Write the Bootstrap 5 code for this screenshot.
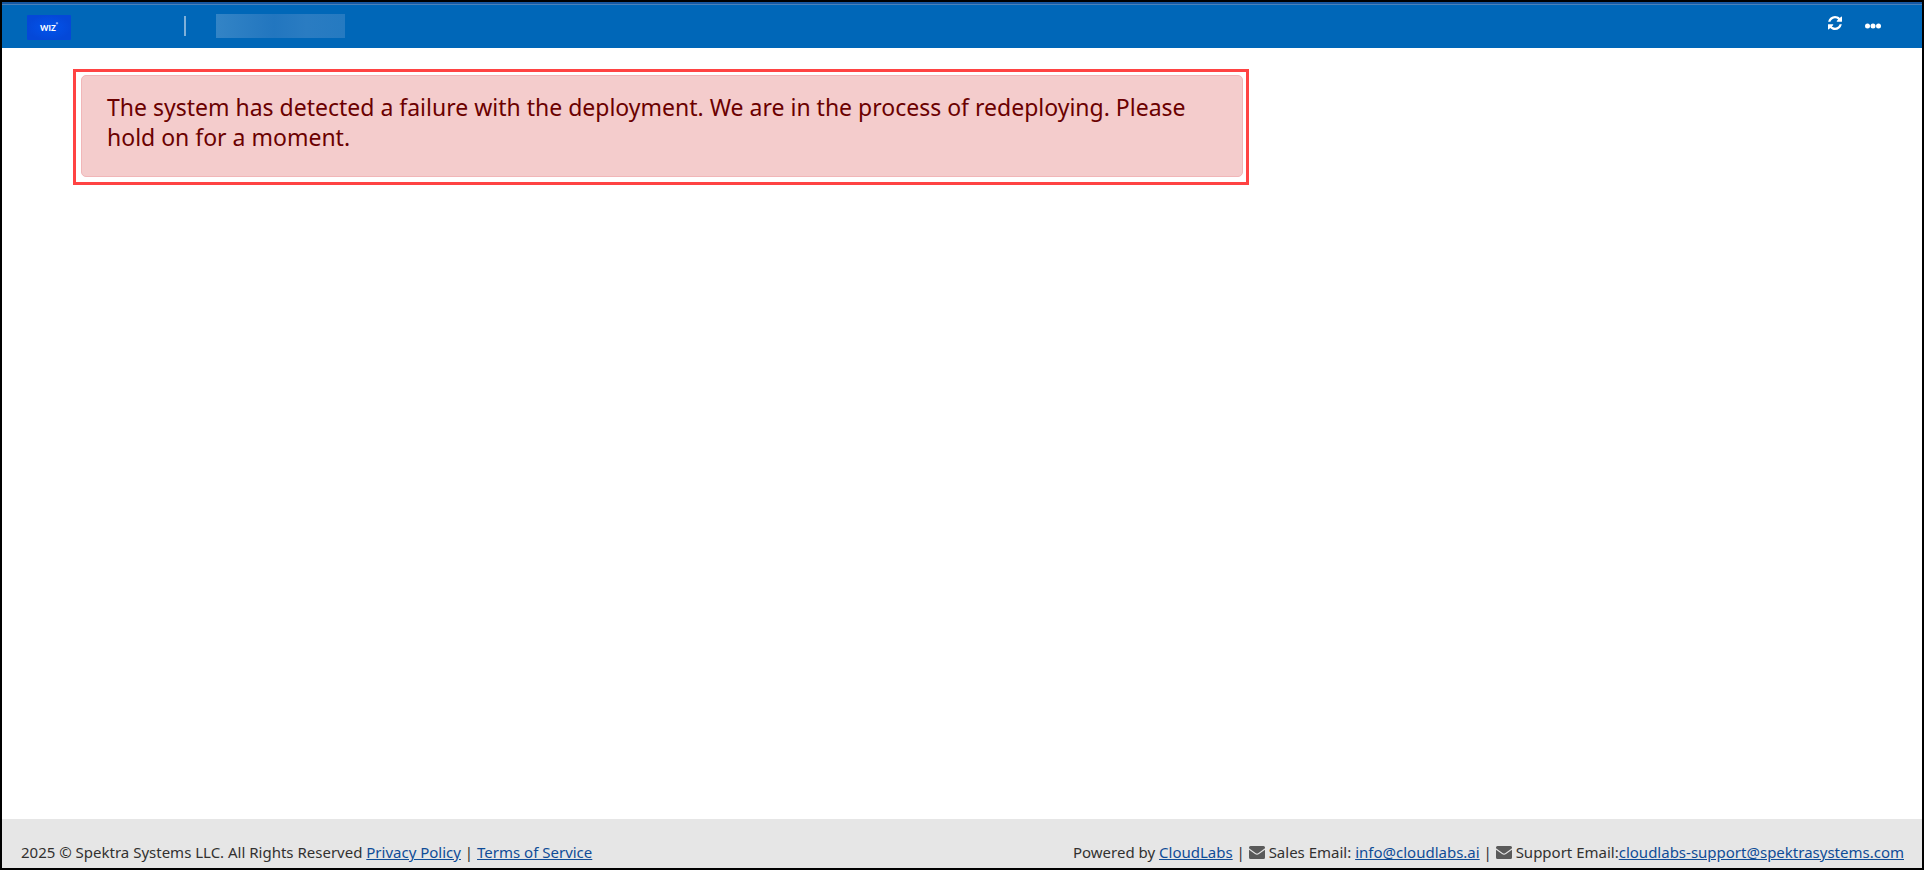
<!DOCTYPE html>
<html lang="en">
<head>
<meta charset="utf-8">
<meta name="viewport" content="width=device-width, initial-scale=1">
<title>CloudLabs</title>
<link href="https://cdn.jsdelivr.net/npm/bootstrap@5.3.0/dist/css/bootstrap.min.css" rel="stylesheet">
<style>
  body { font-family: "Noto Sans", "Open Sans", sans-serif; font-size: 15px; color: #323130; }
  .app-frame { border: 2px solid #000; }
  .top-strip { height: 3px; background: #1558a3; border-bottom: 1px solid #4a80b8; }
  .top-bar { background: #0067b8; height: 43px; padding: 0 41px 1px 25px; }
  .brand-logo { width: 44px; height: 25px; margin-top: 3px; }
  .bar-divider { width: 2px; height: 20px; background: #7fb0d9; margin-left: 113px; }
  .title-placeholder { width: 129px; height: 24px; margin-left: 30px; background: linear-gradient(90deg, #3384c6, #2276bf 45%, #2a7cc2 70%, #257ac1); }
  .bar-actions { gap: 23px; }
  .icon-btn { color: #fff; background: none; border: 0; padding: 0; line-height: 1; }
  .refresh-icon { margin-bottom: 6px; }
  .notice-outline { border: 3px solid #ff4343; padding: 3px 3px 5px 5px; max-width: 1176px; margin: 21px 24px 24px 71px; }
  .notice { background: #f4cccc; border: 1px solid #f1b6b8; border-radius: 5px; color: #6b0000; padding: 16px 25px 24px; margin: 0; }
  .notice-text { font-size: 23px; line-height: 30px; margin: 0; font-weight: 400; }
  .page-footer { background: #e6e6e6; padding: 22px 18px 4px 19px; line-height: 23px; }
  .page-footer a { color: #0f4c97; }
  .mail-icon { vertical-align: -1px; }
</style>
</head>
<body>
<div class="app-frame min-vh-100 d-flex flex-column">
  <header>
    <div class="top-strip"></div>
    <nav class="top-bar d-flex align-items-center" aria-label="Main">
      <a href="#" class="d-flex" aria-label="Wiz">
        <svg class="brand-logo" viewBox="0 0 44 25">
          <defs><radialGradient id="logoFill"><stop offset="0" stop-color="#0254ec"/><stop offset="1" stop-color="#0448d8"/></radialGradient></defs>
          <rect width="44" height="25" rx="1" fill="url(#logoFill)"/>
          <text x="13" y="16" font-family="Lato, sans-serif" font-size="8" font-weight="900" fill="#fff">WIZ</text>
          <path d="M30 7v2.400M28.800 8.200h2.400" stroke="#cfe0ff" stroke-width=".7"/>
        </svg>
      </a>
      <span class="bar-divider"></span>
      <span class="title-placeholder"></span>
      <div class="bar-actions ms-auto d-flex align-items-center">
        <button type="button" class="icon-btn" aria-label="Refresh">
          <svg class="refresh-icon d-block" width="14" height="14" viewBox="0 0 1536 1536" fill="currentColor"><path d="M1511 928q0 5-1 7-64 268-268 434.500T764 1536q-146 0-282.500-55T238 1324l-129 129q-19 19-45 19t-45-19-19-45V960q0-26 19-45t45-19h448q26 0 45 19t19 45-19 45l-137 137q71 66 161 102t187 36q134 0 250-65t186-179q11-17 53-117 8-23 30-23h192q13 0 22.500 9.500t9.500 22.500zm25-800v448q0 26-19 45t-45 19h-448q-26 0-45-19t-19-45 19-45l138-138Q969 256 768 256q-134 0-250 65T332 500q-11 17-53 117-8 23-30 23H50q-13 0-22.500-9.500T18 608v-7q65-268 270-434.500T768 0q146 0 284 55.500T1297 212l130-129q19-19 45-19t45 19 19 45z"/></svg>
        </button>
        <button type="button" class="icon-btn" aria-label="More options">
          <svg class="d-block" width="16" height="6" viewBox="0 0 16 6" fill="currentColor"><circle cx="2.500" cy="3" r="2.500"/><circle cx="8" cy="3" r="2.500"/><circle cx="13.500" cy="3" r="2.500"/></svg>
        </button>
      </div>
    </nav>
  </header>
  <main class="flex-grow-1">
    <div class="notice-outline">
      <div class="alert notice" role="alert">
        <h4 class="notice-text">The system has detected a failure with the deployment. We are in the process of redeploying. Please hold on for a moment.</h4>
      </div>
    </div>
  </main>
  <footer class="page-footer d-flex flex-wrap justify-content-between">
    <div>2025 © Spektra Systems LLC. All Rights Reserved <a href="#">Privacy Policy</a> | <a href="#">Terms of Service</a></div>
    <div>Powered by <a href="#">CloudLabs</a> | <svg class="mail-icon" width="16" height="13" viewBox="0 0 16 13" fill="#5a5a5a"><path d="M1.500 0h13A1.500 1.500 0 0 1 16 1.500v.8L9.500 7Q8 8 6.500 7L0 2.300v-.8A1.500 1.500 0 0 1 1.500 0zM0 3.800l6 4.300q2 1.300 4 0l6-4.300v7.700a1.500 1.500 0 0 1-1.500 1.500h-13A1.500 1.500 0 0 1 0 11.500z"/></svg> Sales Email: <a href="mailto:info@cloudlabs.ai">info@cloudlabs.ai</a> | <svg class="mail-icon" width="16" height="13" viewBox="0 0 16 13" fill="#5a5a5a"><path d="M1.500 0h13A1.500 1.500 0 0 1 16 1.500v.8L9.500 7Q8 8 6.500 7L0 2.300v-.8A1.500 1.500 0 0 1 1.500 0zM0 3.800l6 4.300q2 1.300 4 0l6-4.300v7.700a1.500 1.500 0 0 1-1.500 1.500h-13A1.500 1.500 0 0 1 0 11.500z"/></svg> Support Email:<a href="mailto:cloudlabs-support@spektrasystems.com">cloudlabs-support@spektrasystems.com</a></div>
  </footer>
</div>
<script src="https://cdn.jsdelivr.net/npm/bootstrap@5.3.0/dist/js/bootstrap.bundle.min.js"></script>
</body>
</html>
